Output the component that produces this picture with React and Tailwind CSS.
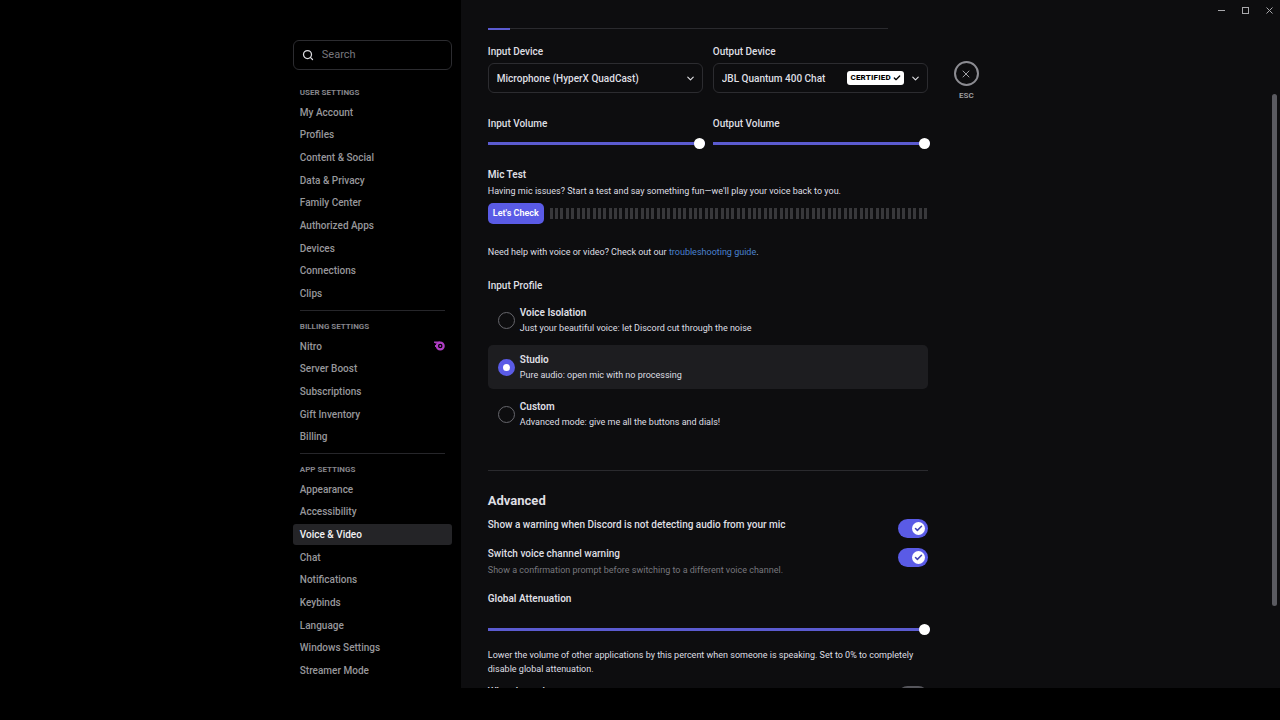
import React, { useState } from "react";
import { Check, ChevronDown, Search, X } from "lucide-react";

const SECTIONS = [
  {
    title: "User Settings",
    listClass: "h-[202px]",
    items: ["My Account", "Profiles", "Content & Social", "Data & Privacy", "Family Center", "Authorized Apps", "Devices", "Connections", "Clips"],
  },
  {
    title: "Billing Settings",
    listClass: "h-[111px]",
    items: ["Nitro", "Server Boost", "Subscriptions", "Gift Inventory", "Billing"],
  },
  {
    title: "App Settings",
    listClass: "h-[202px]",
    items: ["Appearance", "Accessibility", "Voice & Video", "Chat", "Notifications", "Keybinds", "Language", "Windows Settings", "Streamer Mode"],
  },
];

const PROFILES = [
  { id: "isolation", name: "Voice Isolation", text: "Just your beautiful voice: let Discord cut through the noise" },
  { id: "studio", name: "Studio", text: "Pure audio: open mic with no processing" },
  { id: "custom", name: "Custom", text: "Advanced mode: give me all the buttons and dials!" },
];

function NitroIcon() {
  return (
    <svg viewBox="0 0 22 20" className="h-[10px] w-[11px]" aria-hidden="true">
      <path fill="#a93bbd" d="M0 1h12v4H3.500L0 3.500ZM2 8h5v4H2Z" />
      <circle cx="12.500" cy="10" r="6.800" fill="none" stroke="#b03ec4" strokeWidth="4.500" />
      <circle cx="12.500" cy="10" r="2" fill="#b03ec4" />
    </svg>
  );
}

function Sidebar() {
  const [active, setActive] = useState("Voice & Video");
  return (
    <aside className="flex w-[36%] shrink-0 justify-end pr-[9px] pt-10">
      <div className="w-[159px]">
        <label className="flex h-[30px] items-center gap-2 rounded-md border border-[#2c2c30] px-2">
          <Search className="size-3 text-[#dcdce0]" strokeWidth={2.5} aria-hidden="true" />
          <input
            type="search"
            aria-label="Search"
            placeholder="Search"
            className="min-w-0 flex-1 bg-transparent text-[11px] text-[#dcdce0] outline-none placeholder:text-[#77777d]"
          />
        </label>
        <nav aria-label="Settings" className="pt-[17px]">
          {SECTIONS.map((section, index) => (
            <section key={section.title}>
              {index > 0 && <hr className="mx-[7px] mb-[10px] mt-[6px] border-[#26262a]" />}
              <h2 className="px-[7px] pb-1 text-[8px] font-bold uppercase leading-[11px] text-[#85858b]">{section.title}</h2>
              <ul className={`grid auto-rows-fr gap-0.5 ${section.listClass}`}>
                {section.items.map((item) => (
                  <li key={item} className="flex">
                    <button
                      type="button"
                      aria-current={item === active ? "page" : undefined}
                      onClick={() => setActive(item)}
                      className={`flex flex-1 items-center justify-between rounded-[3px] px-[7px] text-[10px] font-medium ${
                        item === active ? "bg-[#242427] text-[#f2f2f4]" : "text-[#97979b]"
                      }`}
                    >
                      {item}
                      {item === "Nitro" && <NitroIcon />}
                    </button>
                  </li>
                ))}
              </ul>
            </section>
          ))}
        </nav>
      </div>
    </aside>
  );
}

function DeviceSelect({ id, label, value, badge }) {
  return (
    <div className="min-w-0">
      <label htmlFor={id} className="block text-[10px] font-medium leading-3">
        {label}
      </label>
      <div className="relative mt-[5px]">
        <select
          id={id}
          className="h-[30px] w-full appearance-none rounded-md border border-[#2c2c30] bg-transparent pl-2 pr-8 text-[10px] font-medium text-[#dfdfe3] outline-none"
        >
          <option>{value}</option>
        </select>
        <div className="pointer-events-none absolute inset-y-0 right-[7px] flex items-center gap-1.5">
          {badge && (
            <span className="flex h-[14px] items-center gap-0.5 rounded-[3px] bg-white px-[3px] text-[8px] font-extrabold tracking-wide text-black">
              {badge}
              <Check className="size-2" strokeWidth={4} aria-hidden="true" />
            </span>
          )}
          <ChevronDown className="size-[11px]" strokeWidth={2.5} aria-hidden="true" />
        </div>
      </div>
    </div>
  );
}

function Slider({ id }) {
  return (
    <input
      id={id}
      type="range"
      min="0"
      max="100"
      defaultValue="100"
      className="block h-[11px] w-[calc(100%+2px)] appearance-none bg-transparent [&::-webkit-slider-runnable-track]:h-[3px] [&::-webkit-slider-runnable-track]:bg-[#5b5bd0] [&::-webkit-slider-thumb]:-mt-1 [&::-webkit-slider-thumb]:size-[11px] [&::-webkit-slider-thumb]:appearance-none [&::-webkit-slider-thumb]:rounded-full [&::-webkit-slider-thumb]:bg-white"
    />
  );
}

function Volume({ id, label }) {
  return (
    <div className="min-w-0">
      <label htmlFor={id} className="block pb-2 text-[10px] font-medium leading-3">
        {label}
      </label>
      <Slider id={id} />
    </div>
  );
}

function MicTest() {
  return (
    <section className="pt-5">
      <h3 className="text-[10px] font-semibold leading-3">Mic Test</h3>
      <p className="pt-1 text-[9px] leading-3">Having mic issues? Start a test and say something fun—we'll play your voice back to you.</p>
      <div className="flex items-center gap-1.5 pt-1.5">
        <button type="button" className="h-[21px] w-14 rounded-[5px] bg-[#5a5be6] text-[9px] font-semibold text-white">
          Let's Check
        </button>
        <div className="flex flex-1 justify-between" aria-hidden="true">
          {Array.from({ length: 71 }, (_, i) => (
            <span key={i} className="h-[11px] w-[3px] bg-[#38383b]" />
          ))}
        </div>
      </div>
      <p className="pt-[22px] text-[9px] leading-3">
        Need help with voice or video? Check out our{" "}
        <a href="#guide" className="text-[#4a82cf]">
          troubleshooting guide
        </a>
        .
      </p>
    </section>
  );
}

function InputProfile() {
  const [selected, setSelected] = useState("studio");
  return (
    <fieldset className="pt-[22px]">
      <legend className="contents text-[10px] font-medium leading-3">
        <span className="block leading-3">Input Profile</span>
      </legend>
      <div className="grid gap-[3px] pt-1.5">
        {PROFILES.map((profile) => (
          <label
            key={profile.id}
            className={`flex h-11 items-center gap-[5px] rounded-[5px] px-[10px] ${selected === profile.id ? "bg-[#1d1d20]" : ""}`}
          >
            <input
              type="radio"
              name="profile"
              checked={selected === profile.id}
              onChange={() => setSelected(profile.id)}
              className="size-[17px] shrink-0 appearance-none rounded-full border border-[#66666c] checked:border-[5px] checked:border-[#5a5be6] checked:bg-white"
            />
            <span className="grid gap-[3px]">
              <span className="text-[10px] font-semibold leading-3">{profile.name}</span>
              <span className="text-[9px] leading-3">{profile.text}</span>
            </span>
          </label>
        ))}
      </div>
    </fieldset>
  );
}

function Toggle({ id, initial }) {
  const [on, setOn] = useState(initial);
  return (
    <span className={`relative flex h-[19px] w-[30px] shrink-0 items-center rounded-full ${on ? "justify-end bg-[#5a5be6]" : "bg-[#55555b]"}`}>
      <input
        id={id}
        type="checkbox"
        role="switch"
        checked={on}
        onChange={() => setOn(!on)}
        className="absolute inset-0 size-full appearance-none"
      />
      <span className="pointer-events-none mx-[3px] flex size-[13px] items-center justify-center rounded-full bg-white">
        {on && <Check className="size-[9px] text-[#4344b4]" strokeWidth={4} aria-hidden="true" />}
      </span>
    </span>
  );
}

function Advanced() {
  return (
    <section className="mt-[34px] border-t border-[#2a2a2e] pt-[22px]">
      <h2 className="text-[13px] font-bold leading-4">Advanced</h2>
      <div className="flex items-start justify-between pt-[10px]">
        <label htmlFor="no-audio" className="text-[10px] font-medium leading-3">
          Show a warning when Discord is not detecting audio from your mic
        </label>
        <Toggle id="no-audio" initial />
      </div>
      <div className="flex items-start justify-between pt-[10px]">
        <div>
          <label htmlFor="switch-channel" className="block text-[10px] font-medium leading-3">
            Switch voice channel warning
          </label>
          <p className="pt-1 text-[9px] leading-3 text-[#77777d]">Show a confirmation prompt before switching to a different voice channel.</p>
        </div>
        <Toggle id="switch-channel" initial />
      </div>
      <label htmlFor="attenuation" className="block pb-[19px] pt-[17px] text-[10px] font-semibold leading-3">
        Global Attenuation
      </label>
      <Slider id="attenuation" />
      <p className="pt-[13px] text-[9px] leading-[14px]">
        Lower the volume of other applications by this percent when someone is speaking. Set to 0% to completely disable global attenuation.
      </p>
      <div className="flex items-start justify-between pt-[10px]">
        <label htmlFor="when-speaking" className="text-[10px] font-medium leading-3">
          When I speak
        </label>
        <Toggle id="when-speaking" initial={false} />
      </div>
    </section>
  );
}

function WindowControls() {
  return (
    <div className="absolute right-1.5 top-1.5 flex gap-[15px] text-[#a8a8ac]">
      <button type="button" aria-label="Minimize" className="flex size-[9px] items-center justify-center">
        <svg viewBox="0 0 9 9" className="size-[9px]" aria-hidden="true">
          <path d="M1 4.500h7" stroke="currentColor" />
        </svg>
      </button>
      <button type="button" aria-label="Maximize" className="flex size-[9px] items-center justify-center">
        <svg viewBox="0 0 9 9" className="size-[9px]" aria-hidden="true">
          <rect x="1.500" y="1.500" width="6" height="6" fill="none" stroke="currentColor" />
        </svg>
      </button>
      <button type="button" aria-label="Close window" className="flex size-[9px] items-center justify-center">
        <svg viewBox="0 0 9 9" className="size-[9px]" aria-hidden="true">
          <path d="M1.500 1.500l6 6m0-6l-6 6" stroke="currentColor" />
        </svg>
      </button>
    </div>
  );
}

export default function App() {
  return (
    <div className="flex h-screen flex-col bg-black pb-8 font-['Roboto','Liberation_Sans',sans-serif] text-[#dfdfe3]">
      <div className="flex min-h-0 flex-1 overflow-hidden">
        <Sidebar />
        <main className="relative flex min-w-0 flex-1 gap-[26px] overflow-hidden bg-[#0d0d0f] pl-[27px] pr-6">
          <div className="w-full max-w-[440px] pt-[27px]">
            <div className="mr-10 flex h-[3px] items-center" aria-hidden="true">
              <div className="h-0.5 w-[22px] bg-[#5b5bd0]" />
              <div className="h-px flex-1 bg-[#2a2a2e]" />
            </div>
            <div className="grid grid-cols-2 gap-[10px] pt-4">
              <DeviceSelect id="input-device" label="Input Device" value="Microphone (HyperX QuadCast)" />
              <DeviceSelect id="output-device" label="Output Device" value="JBL Quantum 400 Chat" badge="CERTIFIED" />
            </div>
            <div className="grid grid-cols-2 gap-[10px] pt-[25px]">
              <Volume id="input-volume" label="Input Volume" />
              <Volume id="output-volume" label="Output Volume" />
            </div>
            <MicTest />
            <InputProfile />
            <Advanced />
          </div>
          <div className="pt-[61px]">
            <button type="button" className="flex flex-col items-center gap-1 text-[#a0a0a5]">
              <span className="flex size-[25px] items-center justify-center rounded-full border-2 border-[#8c8c92]">
                <X className="size-3" strokeWidth={2} aria-hidden="true" />
              </span>
              <span className="text-[8px] font-semibold leading-3">ESC</span>
            </button>
          </div>
          <WindowControls />
          <div className="absolute right-[3px] top-[94px] h-[512px] w-[5px] rounded-full bg-[#5a5a60]" aria-hidden="true" />
        </main>
      </div>
    </div>
  );
}
